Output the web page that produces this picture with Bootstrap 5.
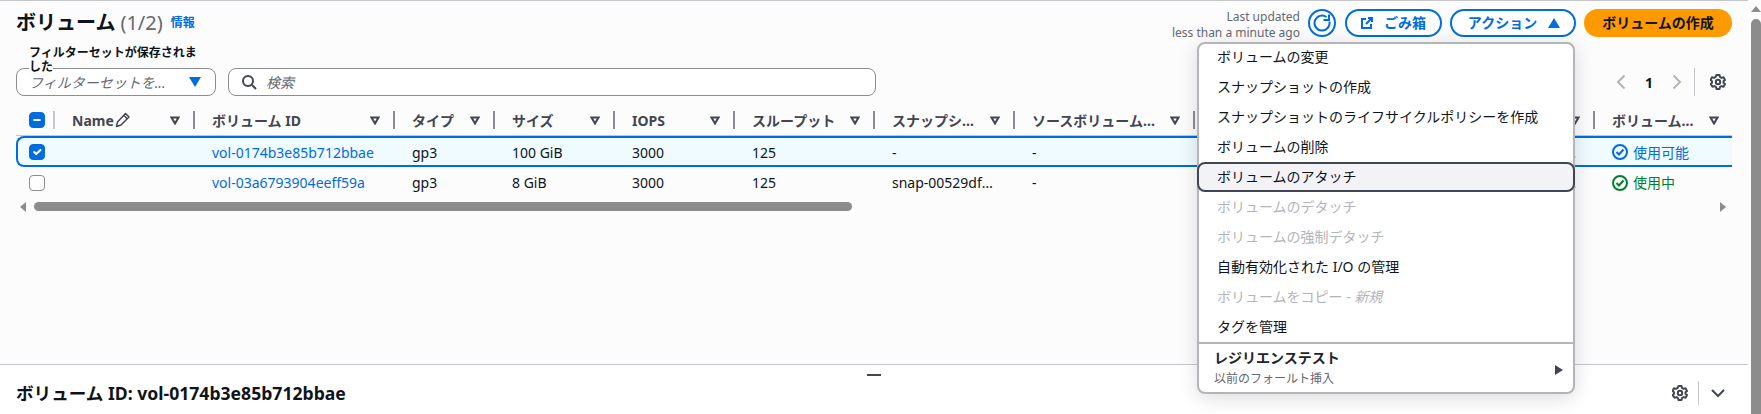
<!DOCTYPE html>
<html lang="ja">
<head>
<meta charset="utf-8">
<title>ボリューム</title>
<link href="https://cdn.jsdelivr.net/npm/bootstrap@5.3.0/dist/css/bootstrap.min.css" rel="stylesheet">
<style>
html,body{height:414px;overflow:hidden}
body{font-family:"Noto Sans","Noto Sans CJK JP",sans-serif;font-size:14px;color:#0f141a;background:#fff}
.shell{width:1748px;height:414px;position:relative;flex:none}
.upper{height:364px;background:#fcfcfc;border-top:1px solid #c6c6cd;padding:8px 16px 0}
.lower{height:50px;background:#fff;border-top:1px solid #c6c6cd;padding:6px 16px 0;position:relative}
.page-bar{width:13px;background:#fcfcfc;flex:none;padding:6px 0 0 3px}
.bar-arrow-up{width:0;height:0;border-left:5px solid transparent;border-right:5px solid transparent;border-bottom:6px solid #8c8c8c}
.bar-thumb-v{width:10px;height:395px;margin-top:7px;background:#8c8c8c;border-radius:5px 5px 0 0}
.head-row{height:28px}
.vol-title{font-size:20px;font-weight:700;line-height:28px;margin:0}
.vol-count{font-weight:400;color:#656871;margin-left:5px}
.info-link{font-size:12px;font-weight:700;color:#006ce0;text-decoration:none;margin-left:8px}
.updated{font-size:12px;line-height:16px;color:#656871;text-align:right;margin-right:8px;padding-top:4px}
.aws-btn{height:28px;border:2px solid #006ce0;border-radius:14px;color:#006ce0;font-weight:700;font-size:14px;line-height:1;padding:0;background:#fff;display:flex;align-items:center;justify-content:center}
.aws-btn:hover{color:#006ce0;background:#fff;border-color:#006ce0}
.btn-refresh{width:28px}
.btn-trash{width:97px;gap:11px;margin-left:9px}
.btn-action{width:126px;gap:11px;margin-left:8px;padding-left:2px}
.btn-create{width:148px;margin-left:8px;background:#f90;border-color:#f90;color:#0f141a}
.btn-create:hover{background:#f90;border-color:#f90;color:#0f141a}
.filter-row{margin-top:31px;height:28px}
.saved-label{position:absolute;left:12px;top:-23px;width:172px;font-size:12px;font-weight:700;line-height:14px}
.saved-label span{background:#fcfcfc}
.set-box{position:relative;width:200px;height:28px;border:1px solid #8c8c94;border-radius:8px;background:#fff;padding:0 14px 0 12px}
.set-text{font-style:italic;color:#656871;flex:1;white-space:nowrap}
.set-box svg{flex:none}
.search-box{width:648px;height:28px;margin-left:12px;border:1px solid #8c8c94;border-radius:8px;background:#fff;padding:0 0 0 12px;gap:9px}
.search-box input{border:0;background:transparent;outline:0;font-style:italic;flex:1;font-size:14px;padding:0;height:24px}
.search-box input::placeholder{color:#656871}
.pager{color:#b4b4bb;margin-right:6px}
.pager-num{font-weight:700;color:#0f141a;margin:0 19px}
.pager-sep{width:1px;height:28px;background:#c6c6cd;margin:0 15px 0 12px}
.table-wrap{width:1716px;margin-top:9px}
.vol-table{table-layout:fixed;width:1716px;border-collapse:separate;border-spacing:0;margin:0;color:#0f141a}
.vol-table>:not(caption)>*>*{padding:0;background:transparent;box-shadow:none;border:0;color:inherit;vertical-align:middle}
.vol-table>thead>tr>th{height:31px;border-bottom:1px solid #c6c6cd;font-weight:700;color:#424650}
.th-in{height:18px;border-right:2px solid #8c8c94;padding:0 13px 0 17px;gap:6px}
.th-in svg{flex:none}
.th-first{border-right-color:#c6c6cd;padding:0 0 0 13px}
.th-end{border-right:0}
.cell-text{flex:1;min-width:0}
.name-head{gap:1px}
.vol-table>tbody>tr>td{height:31px;padding:0 16px 0 17px;white-space:nowrap;overflow:hidden;text-overflow:ellipsis}
.vol-table>tbody>tr>td.td-check{padding:0 0 0 13px}
.vol-table>tbody>tr.row-on>td{background:#f0fbff;border-top:2px solid #006ce0;border-bottom:2px solid #006ce0;padding-top:1px}
.vol-table>tbody>tr.row-on>td.td-check{border-left:2px solid #006ce0;border-radius:8px 0 0 8px;padding:0 0 0 11px}
.vol-table .form-check-input{width:16px;height:16px;margin:0;display:block;border:1px solid #8c8c94;border-radius:4px;float:none}
.vol-table .form-check-input:checked,.vol-table .form-check-input:indeterminate{background-color:#006ce0;border-color:#006ce0}
.vol-link{color:#006ce0;text-decoration:none}
.vol-table>tbody>tr>td.st-blue{color:#006ce0}
.vol-table>tbody>tr>td.st-green{color:#00802f}
.st-in{gap:5px}
.hbar{margin-top:4px;height:9px;padding-left:4px}
.hbar-left{width:0;height:0;border-top:5px solid transparent;border-bottom:5px solid transparent;border-right:6px solid #8c8c8c}
.hbar-thumb{width:818px;height:9px;border-radius:5px;background:#8c8c8c;margin-left:8px}
.hbar-right{width:0;height:0;border-top:5px solid transparent;border-bottom:5px solid transparent;border-left:6px solid #8c8c8c;margin-left:auto;margin-right:6px}
.act-menu{position:absolute;left:1197px;top:42px;width:378px;height:352px;padding:0;margin:0;border:2px solid #b4b4bb;border-radius:8px;background:#fff;box-shadow:0 4px 20px rgba(0,7,22,.14);font-size:14px;display:block;list-style:none}
.act-menu .dropdown-item{height:30px;line-height:30px;padding:0 18px;color:#0f141a;white-space:nowrap}
.act-menu li:first-child .dropdown-item{margin-top:-2px}
.act-menu .dropdown-item.disabled{color:#b4b4bb}
.act-menu .dropdown-item.item-hot{margin:0 -2px;width:378px;border:2px solid #424650;border-radius:8px;background:#f3f3f7;line-height:26px}
.menu-sep{border-top:2px solid #b4b4bb;height:50px;padding:4px 10px 0 15px}
.res-title{font-weight:700;line-height:20px}
.res-sub{font-size:12px;color:#656871;line-height:16px;margin-top:3px}
.res-arrow{width:0;height:0;border-top:5px solid transparent;border-bottom:5px solid transparent;border-left:8px solid #424650}
.drag-bar{position:absolute;left:867px;top:9px;width:14px;height:2px;background:#424650}
.lower-title{font-size:17.600px;font-weight:700;margin:0;line-height:24px}
.lower-tools{color:#424650;margin-right:7px}
.tool-sep{width:1px;height:24px;background:#c6c6cd;margin:0 12px 0 10px}
</style>
</head>
<body class="d-flex">
<div class="shell">
  <section class="upper">
    <div class="head-row d-flex align-items-center">
      <h1 class="vol-title">ボリューム<span class="vol-count">(1/2)</span></h1>
      <a class="info-link" href="#">情報</a>
      <div class="updated ms-auto">Last updated<br>less than a minute ago</div>
      <button type="button" class="btn aws-btn btn-refresh" aria-label="更新">
        <svg width="18" height="18" viewBox="0 0 18 18" fill="none" stroke="currentColor" stroke-width="2"><path d="M16.400 7.500A7.500 7.500 0 1 1 13.500 3"/><path d="M16 .5v5.500h-5.500"/></svg>
      </button>
      <button type="button" class="btn aws-btn btn-trash">
        <svg width="12" height="12" viewBox="0 0 12 12" fill="none" stroke="currentColor" stroke-width="2"><path d="M5 2H1v9h9V7"/><path d="M5 7l6-6M7 1h4v4"/></svg>
        <span>ごみ箱</span>
      </button>
      <button type="button" class="btn aws-btn btn-action">
        <span>アクション</span>
        <svg width="12" height="10" viewBox="0 0 12 10" fill="currentColor"><path d="M6 0l6 10H0z"/></svg>
      </button>
      <button type="button" class="btn aws-btn btn-create">ボリュームの作成</button>
    </div>

    <div class="filter-row d-flex align-items-center">
      <div class="set-box d-flex align-items-center">
        <div class="saved-label"><span>フィルターセットが保存されました</span></div>
        <span class="set-text">フィルターセットを...</span>
        <svg width="12" height="10" viewBox="0 0 12 10" fill="#006ce0"><path d="M0 0h12L6 10z"/></svg>
      </div>
      <div class="search-box d-flex align-items-center">
        <svg width="16" height="16" viewBox="0 0 16 16" fill="none" stroke="#424650" stroke-width="2"><circle cx="7" cy="7" r="5"/><path d="M11 11l4 4"/></svg>
        <input type="text" placeholder="検索" aria-label="検索">
      </div>
      <div class="pager d-flex align-items-center ms-auto">
        <svg width="10" height="16" viewBox="0 0 10 16" fill="none" stroke="#b4b4bb" stroke-width="2"><path d="M8.500 1.500L2 8l6.500 6.500"/></svg>
        <span class="pager-num">1</span>
        <svg width="10" height="16" viewBox="0 0 10 16" fill="none" stroke="#b4b4bb" stroke-width="2"><path d="M1.500 1.500L8 8l-6.500 6.500"/></svg>
        <span class="pager-sep"></span>
        <svg width="16" height="16" viewBox="0 0 16 16" fill="none" stroke="#424650" stroke-width="2" stroke-linejoin="round"><path d="M6.500 1h3l.5 2 1.500.9 2-.6 1.500 2.600-1.500 1.400v1.400l1.500 1.400-1.500 2.600-2-.6-1.500.9-.5 2h-3l-.5-2-1.500-.9-2 .6L.500 10.100 2 8.700V7.300L.500 5.900 2 3.300l2 .6 1.500-.9z"/><circle cx="8" cy="8" r="2.200"/></svg>
      </div>
    </div>

    <div class="table-wrap">
      <table class="table vol-table">
        <colgroup><col style="width:39px"><col style="width:140px"><col style="width:200px"><col style="width:100px"><col style="width:120px"><col style="width:120px"><col style="width:140px"><col style="width:140px"><col style="width:180px"><col style="width:200px"><col style="width:200px"><col style="width:137px"></colgroup>
        <thead>
          <tr>
            <th><div class="th-in th-first d-flex align-items-center"><input id="allRows" class="form-check-input" type="checkbox" aria-label="すべて選択"></div></th>
            <th><div class="th-in d-flex align-items-center"><span class="cell-text name-head d-flex align-items-center">Name <svg width="16" height="16" viewBox="0 0 16 16" fill="none" stroke="#424650" stroke-width="1.500" stroke-linejoin="round"><path d="M1.500 14.500l1-4.500 8-8.500 3.500 3.500-8 8z"/><path d="M9 3.500l3.500 3.500"/></svg></span><svg width="10" height="9" viewBox="0 0 10 9" fill="none" stroke="#424650" stroke-width="2"><path d="M1.500 1.500h7L5 7.500z"/></svg></div></th>
            <th><div class="th-in d-flex align-items-center"><span class="cell-text text-truncate">ボリューム ID</span><svg width="10" height="9" viewBox="0 0 10 9" fill="none" stroke="#424650" stroke-width="2"><path d="M1.500 1.500h7L5 7.500z"/></svg></div></th>
            <th><div class="th-in d-flex align-items-center"><span class="cell-text text-truncate">タイプ</span><svg width="10" height="9" viewBox="0 0 10 9" fill="none" stroke="#424650" stroke-width="2"><path d="M1.500 1.500h7L5 7.500z"/></svg></div></th>
            <th><div class="th-in d-flex align-items-center"><span class="cell-text text-truncate">サイズ</span><svg width="10" height="9" viewBox="0 0 10 9" fill="none" stroke="#424650" stroke-width="2"><path d="M1.500 1.500h7L5 7.500z"/></svg></div></th>
            <th><div class="th-in d-flex align-items-center"><span class="cell-text text-truncate">IOPS</span><svg width="10" height="9" viewBox="0 0 10 9" fill="none" stroke="#424650" stroke-width="2"><path d="M1.500 1.500h7L5 7.500z"/></svg></div></th>
            <th><div class="th-in d-flex align-items-center"><span class="cell-text text-truncate">スループット</span><svg width="10" height="9" viewBox="0 0 10 9" fill="none" stroke="#424650" stroke-width="2"><path d="M1.500 1.500h7L5 7.500z"/></svg></div></th>
            <th><div class="th-in d-flex align-items-center"><span class="cell-text text-truncate">スナップショット</span><svg width="10" height="9" viewBox="0 0 10 9" fill="none" stroke="#424650" stroke-width="2"><path d="M1.500 1.500h7L5 7.500z"/></svg></div></th>
            <th><div class="th-in d-flex align-items-center"><span class="cell-text text-truncate">ソースボリューム情報の参照</span><svg width="10" height="9" viewBox="0 0 10 9" fill="none" stroke="#424650" stroke-width="2"><path d="M1.500 1.500h7L5 7.500z"/></svg></div></th>
            <th><div class="th-in d-flex align-items-center"><span class="cell-text text-truncate">作成日時</span><svg width="10" height="9" viewBox="0 0 10 9" fill="none" stroke="#424650" stroke-width="2"><path d="M1.500 1.500h7L5 7.500z"/></svg></div></th>
            <th><div class="th-in d-flex align-items-center"><span class="cell-text text-truncate">アベイラビリティーゾーン</span><svg width="10" height="9" viewBox="0 0 10 9" fill="none" stroke="#424650" stroke-width="2"><path d="M1.500 1.500h7L5 7.500z"/></svg></div></th>
            <th><div class="th-in th-end d-flex align-items-center"><span class="cell-text text-truncate">ボリュームの状態</span><svg width="10" height="9" viewBox="0 0 10 9" fill="none" stroke="#424650" stroke-width="2"><path d="M1.500 1.500h7L5 7.500z"/></svg></div></th>
          </tr>
        </thead>
        <tbody>
          <tr class="row-on">
            <td class="td-check"><input class="form-check-input" type="checkbox" checked aria-label="行を選択"></td>
            <td></td>
            <td><a class="vol-link" href="#">vol-0174b3e85b712bbae</a></td>
            <td>gp3</td><td>100 GiB</td><td>3000</td><td>125</td><td>-</td><td>-</td>
            <td>2024/01/15</td><td>ap-northeast-1a ap-northeast-1a ap-northeast-1a ap-northeast-1a</td>
            <td class="st-blue"><div class="st-in d-flex align-items-center"><svg width="16" height="16" viewBox="0 0 16 16" fill="none" stroke="currentColor" stroke-width="2"><circle cx="8" cy="8" r="7"/><path d="M4.500 8l2.500 2.500 4.500-5"/></svg>使用可能</div></td>
          </tr>
          <tr>
            <td class="td-check"><input class="form-check-input" type="checkbox" aria-label="行を選択"></td>
            <td></td>
            <td><a class="vol-link" href="#">vol-03a6793904eeff59a</a></td>
            <td>gp3</td><td>8 GiB</td><td>3000</td><td>125</td><td>snap-00529df0123456789</td><td>-</td>
            <td>2024/01/10</td><td>ap-northeast-1a ap-northeast-1a ap-northeast-1a ap-northeast-1a</td>
            <td class="st-green"><div class="st-in d-flex align-items-center"><svg width="16" height="16" viewBox="0 0 16 16" fill="none" stroke="currentColor" stroke-width="2"><circle cx="8" cy="8" r="7"/><path d="M4.500 8l2.500 2.500 4.500-5"/></svg>使用中</div></td>
          </tr>
        </tbody>
      </table>
      <div class="hbar d-flex align-items-center">
        <span class="hbar-left"></span>
        <span class="hbar-thumb"></span>
        <span class="hbar-right"></span>
      </div>
    </div>
  </section>

  <ul class="dropdown-menu act-menu">
    <li><a class="dropdown-item" href="#">ボリュームの変更</a></li>
    <li><a class="dropdown-item" href="#">スナップショットの作成</a></li>
    <li><a class="dropdown-item" href="#">スナップショットのライフサイクルポリシーを作成</a></li>
    <li><a class="dropdown-item" href="#">ボリュームの削除</a></li>
    <li><a class="dropdown-item item-hot" href="#">ボリュームのアタッチ</a></li>
    <li><a class="dropdown-item disabled" href="#">ボリュームのデタッチ</a></li>
    <li><a class="dropdown-item disabled" href="#">ボリュームの強制デタッチ</a></li>
    <li><a class="dropdown-item" href="#">自動有効化された I/O の管理</a></li>
    <li><a class="dropdown-item disabled" href="#">ボリュームをコピー - <em>新規</em></a></li>
    <li><a class="dropdown-item" href="#">タグを管理</a></li>
    <li class="menu-sep d-flex align-items-start justify-content-between">
      <div><div class="res-title">レジリエンステスト</div><div class="res-sub">以前のフォールト挿入</div></div>
      <span class="res-arrow align-self-center"></span>
    </li>
  </ul>

  <section class="lower d-flex align-items-center">
    <span class="drag-bar"></span>
    <h2 class="lower-title">ボリューム ID: vol-0174b3e85b712bbae</h2>
    <div class="lower-tools d-flex align-items-center ms-auto">
      <svg width="16" height="16" viewBox="0 0 16 16" fill="none" stroke="#424650" stroke-width="2" stroke-linejoin="round"><path d="M6.500 1h3l.5 2 1.500.9 2-.6 1.500 2.600-1.500 1.400v1.400l1.500 1.400-1.500 2.600-2-.6-1.500.9-.5 2h-3l-.5-2-1.500-.9-2 .6L.500 10.100 2 8.700V7.300L.500 5.900 2 3.300l2 .6 1.500-.9z"/><circle cx="8" cy="8" r="2.200"/></svg>
      <span class="tool-sep"></span>
      <svg width="14" height="10" viewBox="0 0 14 10" fill="none" stroke="#424650" stroke-width="2"><path d="M1 2l6 6 6-6"/></svg>
    </div>
  </section>
</div>
<aside class="page-bar">
  <div class="bar-arrow-up"></div>
  <div class="bar-thumb-v"></div>
</aside>
<script src="https://cdn.jsdelivr.net/npm/bootstrap@5.3.0/dist/js/bootstrap.bundle.min.js"></script>
<script>document.getElementById('allRows').indeterminate = true;</script>
</body>
</html>
